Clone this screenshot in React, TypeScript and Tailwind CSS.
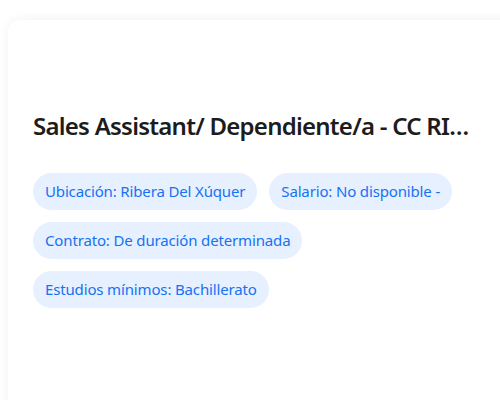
const tags = [
  'Ubicación: Ribera Del Xúquer',
  'Salario: No disponible -',
  'Contrato: De duración determinada',
  'Estudios mínimos: Bachillerato',
]

export default function App() {
  return (
    <div className="h-[400px] w-[500px] overflow-hidden bg-white pt-5 pl-2 font-['Noto_Sans',sans-serif]">
      <div className="min-h-[420px] w-[520px] rounded-xl bg-white px-[25px] pt-[90px] shadow-[0_0_12px_rgba(0,0,0,0.06)]">
        <h1 className="w-[440px] truncate text-[24px] font-semibold leading-[1.3] tracking-[-0.75px] text-[#1c1c1c]">
          Sales Assistant/ Dependiente/a - CC RIBERA DEL XÚQUER
        </h1>
        <div className="mt-[32px] flex w-[440px] flex-wrap gap-3">
          {tags.map((t) => (
            <span
              key={t}
              className="flex h-[37px] items-center rounded-full bg-[#e6f0fe] px-3 text-[15px] tracking-[-0.15px] text-[#1672f4]"
            >
              {t}
            </span>
          ))}
        </div>
      </div>
    </div>
  )
}
